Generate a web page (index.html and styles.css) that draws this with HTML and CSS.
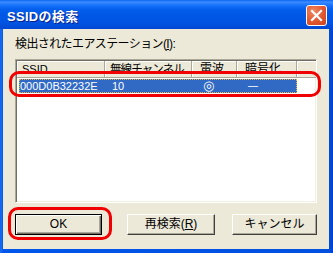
FILE: index.html
```html
<!DOCTYPE html>
<html lang="ja">
<head>
<meta charset="utf-8">
<link rel="stylesheet" href="styles.css">
</head>
<body>
<div class="window">
  <div class="titlebar">
    <span class="title">SSIDの検索</span>
    <span class="close">
      <svg width="13" height="13" viewBox="0 0 13 13"><path d="M2 2 L11 11 M11 2 L2 11" stroke="#fff" stroke-width="2.2" stroke-linecap="square"/></svg>
    </span>
  </div>
  <div class="client">
    <div class="label">検出されたエアステーション(<u>I</u>):</div>
    <div class="list">
      <div class="header">
        <div class="hcell c1">SSID</div>
        <div class="hcell c2">無線チャンネル</div>
        <div class="hcell c3">電波</div>
        <div class="hcell c4">暗号化</div>
        <div class="hcell c5"></div>
      </div>
      <div class="row selected">
        <div class="cell c1">000D0B32232E</div>
        <div class="cell c2">10</div>
        <div class="cell c3 sig">◎</div>
        <div class="cell c4 enc">—</div>
      </div>
    </div>
    <div class="buttons">
      <div class="btn default">OK</div>
      <div class="btn b2">再検索(<u>R</u>)</div>
      <div class="btn b3">キャンセル</div>
    </div>
  </div>
  <div class="hl hl-row"></div>
  <div class="hl hl-ok"></div>
</div>
</body>
</html>
```
FILE: styles.css
```css
html, body { margin: 0; padding: 0; }
body {
  width: 333px; height: 253px; overflow: hidden;
  font-family: "Liberation Sans", "Noto Sans CJK JP", sans-serif;
  font-size: 12px;
}
.window {
  position: relative;
  width: 333px; height: 253px;
  box-sizing: border-box;
  display: flex; flex-direction: column;
  background: linear-gradient(to right, #0A5BE8 0, #1F6FF3 1px, #0055EA 3px, #0050E0 329px, #0041C8 333px);
  padding: 0 4px 4px 3px;
}
.titlebar {
  height: 29px;
  margin: 0 -4px 0 -3px;
  padding: 0 6px 0 7px;
  display: flex; align-items: center; justify-content: space-between;
  background: linear-gradient(to bottom, #0A64F0 0, #3C8CFF 2px, #1A73FA 5px, #0560EE 9px, #0058E6 14px, #0055E4 20px, #0050DD 25px, #0046D2 29px);
}
.title {
  color: #fff; font-weight: bold; font-size: 13px;
  text-shadow: 1px 1px 0 #0A1E8A;
  margin-top: 1px;
  letter-spacing: 0.3px;
}
.close {
  width: 19px; height: 19px;
  border: 1px solid #fff; border-radius: 3px;
  background: radial-gradient(circle at 35% 30%, #F08A64 0, #E35A31 50%, #C8401E 100%);
  display: flex; align-items: center; justify-content: center;
  margin-top: 2px;
}
.client {
  flex: 1;
  background: #ECE9D8;
  padding: 9px 12px 0 12px;
  display: flex; flex-direction: column;
}
.label {
  height: 12px; line-height: 12px;
  color: #000;
  letter-spacing: -0.6px;
}
.label u, .btn u { text-decoration: underline; }
.list {
  margin-top: 9px;
  height: 144px;
  box-sizing: border-box;
  background: #fff;
  border-top: 1px solid #ACA899; border-left: 1px solid #ACA899;
  border-right: 1px solid #fff; border-bottom: 1px solid #fff;
  box-shadow: inset 1px 1px 0 #716F64, inset -1px -1px 0 #F1EFE2;
  padding: 1px 0 0 1px;
}
.header {
  display: flex; height: 16px;
  background: #ECE9D8;
  border-bottom: 1px solid #ACA899;
  box-shadow: inset 0 1px 0 #fff;
}
.hcell {
  box-sizing: border-box;
  height: 16px; line-height: 16px;
  padding-left: 5px;
  white-space: nowrap; overflow: hidden;
  border-right: 1px solid #ACA899;
  box-shadow: inset 1px 0 0 #fff;
  color: #000;
}
.hcell.c1 { font-size: 11px; }
.c1 { width: 88px; }
.c2 { width: 87px; }
.c3 { width: 45px; }
.c4 { width: 60px; }
.hcell.c5 { flex: 1; border-right: none; }
.hcell.c2 { padding-left: 5px; letter-spacing: -0.9px; font-size: 11.5px; }
.hcell.c3 { padding-left: 8px; }
.hcell.c4 { padding-left: 8px; }
.row {
  display: flex; height: 14px; margin-top: 1px; margin-left: 2px;
  width: 278px;
}
.selected {
  background: #316AC5;
  outline: 1px dotted #E8B04A; outline-offset: -1px;
}
.cell {
  box-sizing: border-box;
  height: 14px; line-height: 14px;
  color: #fff; white-space: nowrap; padding-left: 1px;
  font-size: 11px;
}
.row .c1 { width: 86px; }
.row .c2 { padding-left: 7px; }
.row .sig { padding-left: 11px; font-family: "DejaVu Sans", sans-serif; font-size: 13px; line-height: 14px; }
.row .enc { padding-left: 11px; font-size: 10px; }
.buttons {
  display: flex;
  margin-top: 11px;
}
.btn {
  box-sizing: border-box;
  height: 21px; width: 87px;
  line-height: 19px;
  text-align: center;
  color: #000;
  background: #ECE9D8;
  border-top: 1px solid #fff; border-left: 1px solid #fff;
  border-right: 1px solid #404040; border-bottom: 1px solid #404040;
  box-shadow: inset -1px -1px 0 #ACA899;
}
.btn.default {
  border: 1px solid #000;
  box-shadow: inset 1px 1px 0 #fff, inset -1px -1px 0 #716F64, inset -2px -2px 0 #ACA899;
}
.b2 { margin-left: 25px; width: 88px; }
.b3 { margin-left: 17px; width: 85px; }
.hl {
  position: absolute;
  border: 3px solid #F00000;
  box-sizing: border-box;
}
.hl-row { left: 9px; top: 71px; width: 312px; height: 26px; border-radius: 10px; }
.hl-ok { left: 8px; top: 207px; width: 104px; height: 33px; border-radius: 10px; }
```
